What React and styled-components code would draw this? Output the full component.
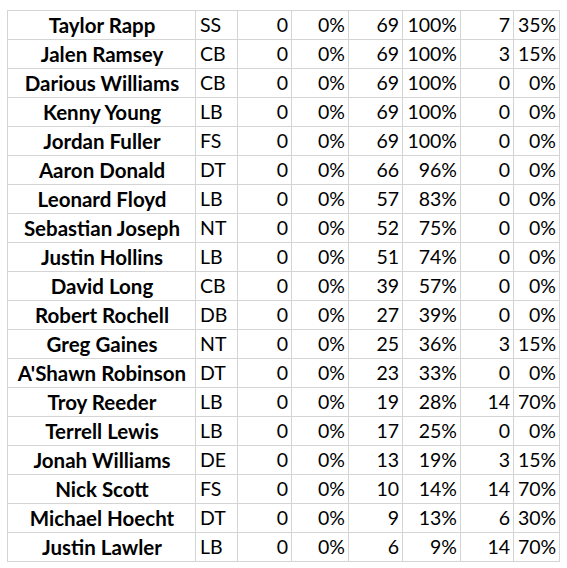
import React from 'react';
import styled, { createGlobalStyle } from 'styled-components';

const GlobalStyle = createGlobalStyle`
    body {
        margin: 0;
        background: #ffffff;
    }
`;

const players = [
    ['Taylor Rapp', 'SS', 0, '0%', 69, '100%', 7, '35%'],
    ['Jalen Ramsey', 'CB', 0, '0%', 69, '100%', 3, '15%'],
    ['Darious Williams', 'CB', 0, '0%', 69, '100%', 0, '0%'],
    ['Kenny Young', 'LB', 0, '0%', 69, '100%', 0, '0%'],
    ['Jordan Fuller', 'FS', 0, '0%', 69, '100%', 0, '0%'],
    ['Aaron Donald', 'DT', 0, '0%', 66, '96%', 0, '0%'],
    ['Leonard Floyd', 'LB', 0, '0%', 57, '83%', 0, '0%'],
    ['Sebastian Joseph', 'NT', 0, '0%', 52, '75%', 0, '0%'],
    ['Justin Hollins', 'LB', 0, '0%', 51, '74%', 0, '0%'],
    ['David Long', 'CB', 0, '0%', 39, '57%', 0, '0%'],
    ['Robert Rochell', 'DB', 0, '0%', 27, '39%', 0, '0%'],
    ['Greg Gaines', 'NT', 0, '0%', 25, '36%', 3, '15%'],
    ["A'Shawn Robinson", 'DT', 0, '0%', 23, '33%', 0, '0%'],
    ['Troy Reeder', 'LB', 0, '0%', 19, '28%', 14, '70%'],
    ['Terrell Lewis', 'LB', 0, '0%', 17, '25%', 0, '0%'],
    ['Jonah Williams', 'DE', 0, '0%', 13, '19%', 3, '15%'],
    ['Nick Scott', 'FS', 0, '0%', 10, '14%', 14, '70%'],
    ['Michael Hoecht', 'DT', 0, '0%', 9, '13%', 6, '30%'],
    ['Justin Lawler', 'LB', 0, '0%', 6, '9%', 14, '70%'],
];

const widths = [188, 42, 54, 57, 54, 58, 53, 46];

const App = () => (
    <>
        <GlobalStyle />
        <Sheet>
            <Table>
                <colgroup>
                    {widths.map((w, i) => (
                        <col key={i} style={{ width: w }} />
                    ))}
                </colgroup>
                <tbody>
                    {players.map(row => (
                        <Row key={row[0]}>
                            <NameCell>{row[0]}</NameCell>
                            <Cell align="left">{row[1]}</Cell>
                            {row.slice(2).map((v, i) => (
                                <Cell key={i} align="right">
                                    {v}
                                </Cell>
                            ))}
                        </Row>
                    ))}
                </tbody>
            </Table>
        </Sheet>
    </>
);

const Sheet = styled.div`
    padding: 10px 0 0 7px;
`;

const Table = styled.table`
    border-collapse: collapse;
    table-layout: fixed;
    width: 552px;
    font-family: Lato, 'Open Sans', sans-serif;
    font-size: 19.5px;
    color: #000000;
`;

const Row = styled.tr`
    height: 29px;
`;

const Cell = styled.td`
    border: 1px solid #d4d4d4;
    padding: 0 3px 0 4px;
    text-align: ${({ align }) => align};
    white-space: nowrap;
    overflow: hidden;
    line-height: 28px;
`;

const NameCell = styled(Cell)`
    font-weight: 700;
    font-size: 20.5px;
    text-align: center;
`;

export default App;
